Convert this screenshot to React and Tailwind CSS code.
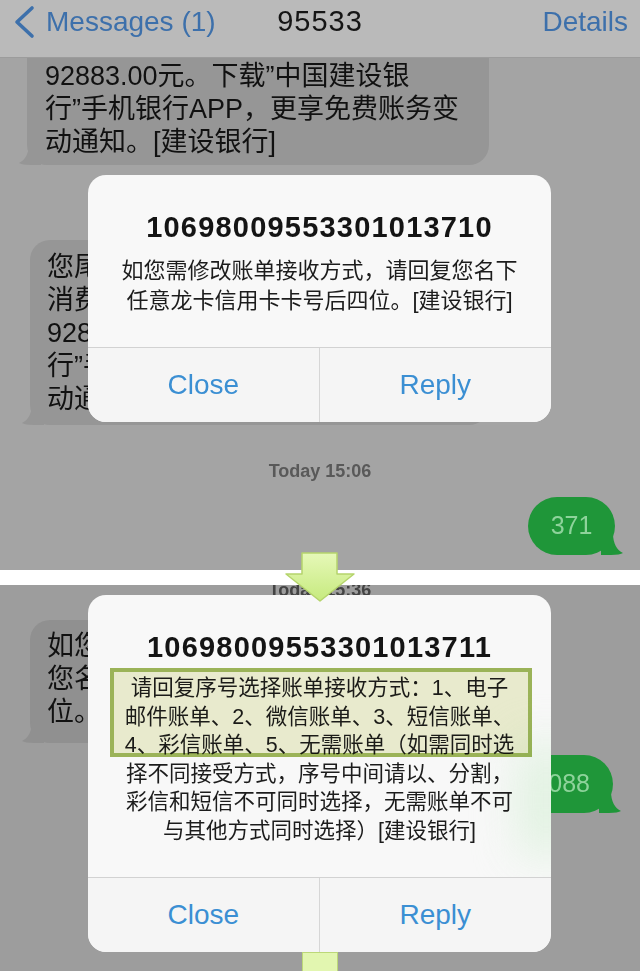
import React from 'react'

const FONT = "font-['Liberation_Sans','Noto_Sans_CJK_SC',sans-serif]"

function TailLeft({ color }) {
  return (
    <svg className="absolute -left-[8px] bottom-0 w-[22px] h-[22px]" viewBox="0 0 22 22">
      <path d="M22 0 V22 H12 C6 22 2 21 0 20 C6 17 10 11 10 0 Z" fill={color} />
    </svg>
  )
}

function TailRight({ color }) {
  return (
    <svg className="absolute -right-[8px] bottom-0 w-[22px] h-[22px]" viewBox="0 0 22 22">
      <path d="M0 0 V22 H10 C16 22 20 21 22 20 C16 17 12 11 12 0 Z" fill={color} />
    </svg>
  )
}

function AlertButtons() {
  return (
    <div className="relative mt-auto h-[75px] grid grid-cols-2 border-t border-[#d2d2d2] bg-[#f5f5f5] rounded-b-[18px]">
      <div className="flex items-center justify-center border-r border-[#d6d6d6] text-[28px] text-[#3b8fd3]">
        Close
      </div>
      <div className="flex items-center justify-center text-[28px] text-[#3b8fd3]">
        Reply
      </div>
    </div>
  )
}

export default function App() {
  return (
    <div className={`relative w-[640px] h-[971px] overflow-hidden bg-white ${FONT}`}>
      {/* top screenshot */}
      <div className="relative h-[570px] bg-[#a4a4a4] overflow-hidden">
        <div className="grid grid-cols-[1fr_auto_1fr] items-center h-[58px] pb-[14px] bg-[#bababa] border-b border-[#9c9c9c]">
          <div className="flex items-center">
            <svg className="ml-[12px] w-[24px] h-[34px]" viewBox="0 0 24 34">
              <polyline points="20,3 5,17 20,31" fill="none" stroke="#3d70ab" strokeWidth="3.6" strokeLinecap="round" strokeLinejoin="round" />
            </svg>
            <span className="ml-[10px] text-[28px] text-[#3d70ab] whitespace-nowrap">Messages (1)</span>
          </div>
          <div className="text-[29px] tracking-[1px] text-[#151515]">95533</div>
          <div className="justify-self-end pr-[12px] text-[28px] text-[#3d70ab]">Details</div>
        </div>

        <div className="flex flex-col">
          <div className="relative ml-[27px] w-[462px] bg-[#969696] rounded-b-[20px] pl-[18px] pt-[2px] pb-[6px] text-[27px] leading-[33px] text-[#111111]">
            <div className="whitespace-nowrap">92883.00元。下载”中国建设银</div>
            <div className="whitespace-nowrap">行”手机银行APP，更享免费账务变</div>
            <div className="whitespace-nowrap">动通知。[建设银行]</div>
            <TailLeft color="#969696" />
          </div>

          <div className="relative mt-[75px] ml-[30px] w-[459px] bg-[#969696] rounded-[20px] pl-[17px] pt-[11px] pb-[9px] text-[27px] leading-[33px] text-[#111111]">
            <div className="whitespace-nowrap">您尾号3710信用卡本期账单</div>
            <div className="whitespace-nowrap">消费金额合计人民币</div>
            <div className="whitespace-nowrap">92883.00元。下载”中国建设银</div>
            <div className="whitespace-nowrap">行”手机银行APP，更享免费账务变</div>
            <div className="whitespace-nowrap">动通知。[建设银行]</div>
            <TailLeft color="#969696" />
          </div>

          <div className="mt-[34px] text-center text-[18px] leading-[24px] font-bold text-[#595959]">Today 15:06</div>

          <div className="relative self-end mt-[14px] mr-[25px] w-[87px] h-[58px] rounded-[29px] bg-[#1f9639] flex items-center justify-center text-[25px] text-[#8ed39b]">
            371
            <TailRight color="#1f9639" />
          </div>
        </div>

        <div className="absolute left-[88px] top-[175px] w-[463px] h-[247px] rounded-[18px] bg-[#f8f8f8] flex flex-col">
          <div className="pt-[34px] text-center text-[29px] leading-[36px] font-bold tracking-[1.2px] text-[#141414]">
            10698009553301013710
          </div>
          <div className="mt-[11px] text-center text-[22px] leading-[30px] text-[#1c1c1c]">
            <div className="whitespace-nowrap">如您需修改账单接收方式，请回复您名下</div>
            <div className="whitespace-nowrap">任意龙卡信用卡卡号后四位。[建设银行]</div>
          </div>
          <AlertButtons />
        </div>
      </div>

      <div className="h-[15px] bg-white" />

      {/* bottom screenshot */}
      <div className="relative h-[386px] bg-[#9d9d9d] overflow-hidden">
        <div className="flex flex-col">
          <div className="-mt-[7px] text-center text-[18px] leading-[24px] font-bold text-[#444444]">Today 15:36</div>

          <div className="relative mt-[18px] ml-[30px] w-[459px] bg-[#909090] rounded-[20px] pl-[17px] pt-[10px] pb-[14px] text-[27px] leading-[33px] text-[#111111]">
            <div className="whitespace-nowrap">如您需修改账单接收方式，请回复</div>
            <div className="whitespace-nowrap">您名下任意龙卡信用卡卡号后四</div>
            <div className="whitespace-nowrap">位。[建设银行]</div>
            <TailLeft color="#909090" />
          </div>

          <div className="relative self-end mt-[12px] mr-[27px] w-[120px] h-[58px] rounded-[29px] bg-[#1f9639] flex items-center justify-end pr-[23px] text-[25px] text-[#8ed39b]">
            3088
            <TailRight color="#1f9639" />
          </div>
        </div>

        <div className="absolute left-[88px] top-[10px] w-[463px] h-[357px] rounded-[18px] bg-[#f8f8f8] flex flex-col overflow-hidden">
          <div className="absolute -right-[20px] top-[150px] w-[50px] h-[110px] bg-[#d6efd6] blur-xl opacity-80" />
          <div className="relative pt-[34px] text-center text-[29px] leading-[36px] font-bold tracking-[1.2px] text-[#141414]">
            10698009553301013711
          </div>
          <div className="relative mt-[9px] text-center text-[21.5px] leading-[28.5px] text-[#1c1c1c]">
            <div className="whitespace-nowrap"> 请回复序号选择账单接收方式：1、电子</div>
            <div className="whitespace-nowrap">邮件账单、2、微信账单、3、短信账单、</div>
            <div className="whitespace-nowrap">4、彩信账单、5、无需账单（如需同时选</div>
            <div className="whitespace-nowrap">择不同接受方式，序号中间请以、分割，</div>
            <div className="whitespace-nowrap">彩信和短信不可同时选择，无需账单不可</div>
            <div className="whitespace-nowrap">与其他方式同时选择）[建设银行]</div>
          </div>
          <div className="absolute left-[22px] top-[73px] w-[422px] h-[89px] border-[4px] border-[#9fb85a] bg-[#eff1d3] mix-blend-multiply" />
          <AlertButtons />
        </div>

        <div className="absolute left-[302px] top-[367px] w-[36px] h-[24px] bg-[#e2f6b0] border border-[#bcd878]" />
      </div>

      {/* arrow between screenshots */}
      <svg className="absolute left-[282px] top-[550px] w-[76px] h-[54px]" viewBox="0 0 76 54">
        <defs>
          <linearGradient id="arrowFill" x1="0" y1="0" x2="0" y2="1">
            <stop offset="0" stopColor="#e6f8b8" />
            <stop offset="1" stopColor="#c6ea7e" />
          </linearGradient>
        </defs>
        <polygon points="20,3 55,3 55,24 72,24 38,51 4,24 20,24" fill="url(#arrowFill)" stroke="#b5d46c" strokeWidth="1.5" strokeLinejoin="round" />
      </svg>
    </div>
  )
}
